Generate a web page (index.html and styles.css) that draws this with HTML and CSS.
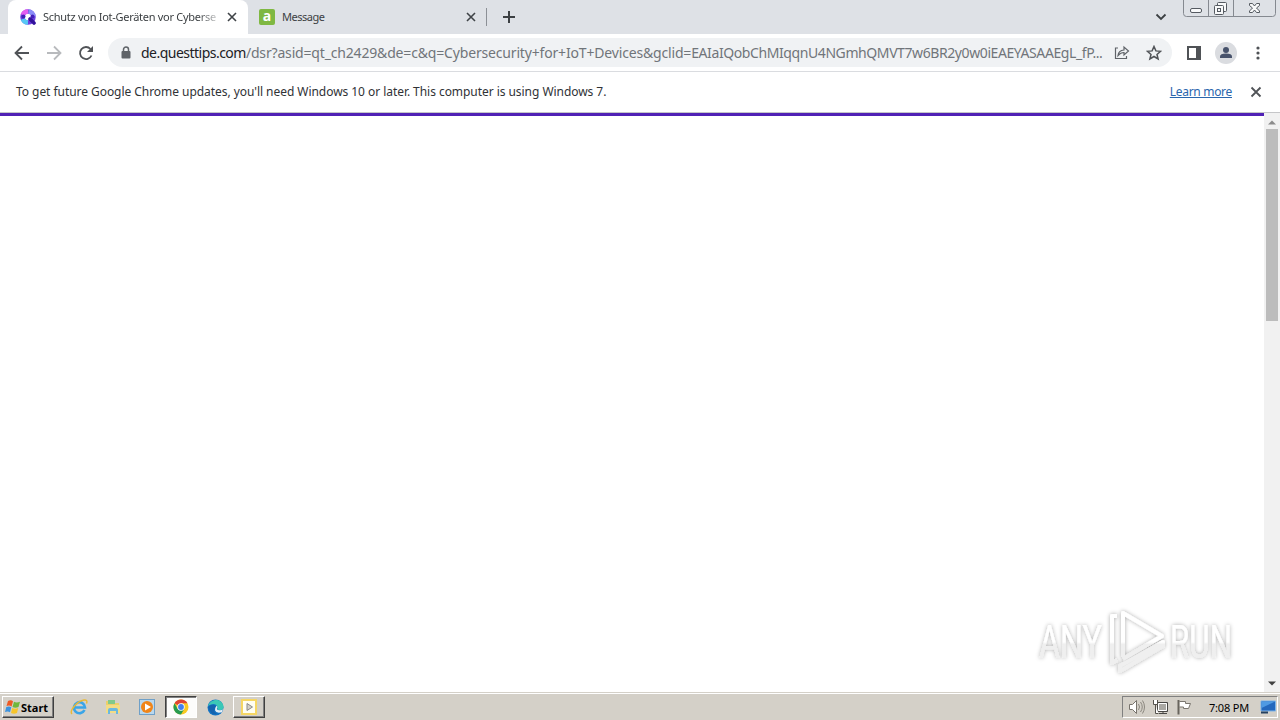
FILE: index.html
```html
<!doctype html>
<html lang="en">
  <head>
    <meta charset="UTF-8" />
    <title>Schutz von Iot-Geräten vor Cybersecurity</title>
    <link rel="stylesheet" href="styles.css">
  </head>

  <body>
    <div class="tabstrip">
      <div class="tab active">
        <svg class="favicon" width="16" height="16" viewBox="0 0 16 16">
          <circle cx="8" cy="8" r="5.5" fill="none" stroke="#6c3fe0" stroke-width="4.5" />
          <path d="M2.8 6a5.5 5.5 0 0 1 5.2-3.5" fill="none" stroke="#e45cf0" stroke-width="4.5" />
          <path d="M8 13.5A5.5 5.5 0 0 1 2.8 10" fill="none" stroke="#58c8f5" stroke-width="4.5" />
          <path d="M8.5 2.5a5.5 5.5 0 0 1 5 5" fill="none" stroke="#8a8cf8" stroke-width="4.5" />
          <path d="M10 10l4 4" stroke="#32129c" stroke-width="3.6" stroke-linecap="round" />
          <circle cx="3.5" cy="7.5" r="2" fill="#4420ba" />
          <circle cx="12.500" cy="7.500" r="2" fill="#4420ba" />
        </svg>
        <span class="tab-title fade">Schutz von Iot-Geräten vor Cyberse</span>
        <svg class="tab-close" width="10" height="10" viewBox="0 0 10 10"><path d="M1 1l8 8M9 1l-8 8" /></svg>
      </div>
      <div class="tab">
        <span class="message-icon">a</span>
        <span class="tab-title message">Message</span>
        <svg class="tab-close" width="10" height="10" viewBox="0 0 10 10"><path d="M1 1l8 8M9 1l-8 8" /></svg>
      </div>
      <svg class="new-tab" width="12" height="12" viewBox="0 0 12 12"><path d="M6 0v12M0 6h12" /></svg>
      <svg class="tab-search" width="12" height="8" viewBox="0 0 12 8"><path d="M1.5 1.5L6 6l4.500-4.500" /></svg>
      <svg class="window-buttons" width="94" height="18" viewBox="0 0 94 18">
        <path d="M.5 0v13.500q0 3 3 3h86q3 0 3-3V0M25.500 0v16M50.500 0v16" fill="none" stroke="#858990" />
        <g fill="#f8f9fa" stroke="#555a61">
          <rect x="7.500" y="8.500" width="11" height="4" rx="1.500" />
          <rect x="34.500" y="2.500" width="9" height="9" rx="1" />
          <rect x="31.500" y="5.500" width="9" height="9" rx="1" />
          <rect x="34.500" y="8.500" width="3" height="3" />
          <path d="M66.500 3.500h3l2 2.500 2-2.500h3v2L73.500 8l3 3v1.500h-3l-2-2.500-2 2.500h-3V11l3-3-3-2.500z" />
        </g>
      </svg>
    </div>

    <div class="toolbar">
      <svg class="nav" width="16" height="16" viewBox="0 0 16 16"><path d="M15 8H2M8 1.500L1.500 8 8 14.500" /></svg>
      <svg class="nav disabled" width="16" height="16" viewBox="0 0 16 16"><path d="M1 8h13M8 1.500L14.500 8 8 14.500" /></svg>
      <svg class="nav" width="16" height="16" viewBox="0 0 16 16"><path d="M13.500 10.500A6 6 0 1 1 12.500 4" /><path class="solid" d="M15 1v6H9z" /></svg>
      <div class="omnibox">
        <svg class="lock" width="10" height="13" viewBox="0 0 10 13"><path d="M2.500 6V3.500a2.500 2.500 0 0 1 5 0V6" fill="none" stroke="#5f6368" stroke-width="1.500" /><rect x=".5" y="5" width="9" height="7.500" rx="1" fill="#5f6368" /></svg>
        <span class="url"><span class="host">de.questtips.com</span><span class="path">/dsr?asid=qt_ch2429&amp;de=c&amp;q=Cybersecurity+for+IoT+Devices&amp;gclid=</span><span class="click-id">EAIaIQobChMIqqnU4NGmhQMVT7w6BR2y0w0iEAEYASAAEgL_fP...</span></span>
        <svg class="share" width="16" height="15" viewBox="0 0 16 15"><path d="M4 3H1.500v10.500h11V11M4 10.500q.5-5 6-5.500V2l4.500 4L10 10V7.500q-3.500 0-6 3z" /></svg>
        <svg class="star" width="16" height="16" viewBox="0 0 16 16"><path d="M8 1.500l1.900 4.400 4.700.4-3.600 3.100 1.100 4.600L8 11.500 3.900 14 5 9.400 1.400 6.300l4.700-.4z" /></svg>
      </div>
      <svg class="side-panel" width="14" height="14" viewBox="0 0 14 14"><rect x="1" y="1" width="12" height="12" fill="none" stroke="#4f5256" stroke-width="2" /><path d="M9 1h4v12H9z" fill="#4f5256" /></svg>
      <svg class="profile" width="22" height="22" viewBox="0 0 22 22"><circle cx="11" cy="11" r="11" fill="#dadce0" /><circle cx="11" cy="8" r="3" fill="#47526b" /><path d="M5 16v-1.500q0-3 6-3t6 3V16z" fill="#47526b" /></svg>
      <svg class="menu" width="4" height="14" viewBox="0 0 4 14"><circle cx="2" cy="2" r="1.600" /><circle cx="2" cy="7" r="1.600" /><circle cx="2" cy="12" r="1.600" /></svg>
    </div>

    <div class="infobar">
      <span class="info-text">To get future Google Chrome updates, you'll need Windows 10 or later. This computer is using Windows 7.</span>
      <a class="learn-more" href="#">Learn more</a>
      <svg class="info-close" width="12" height="12" viewBox="0 0 12 12"><path d="M1.500 1.500l9 9M10.500 1.500l-9 9" /></svg>
    </div>

    <div class="viewport">
      <div class="page">
        <div class="progress"></div>
        <svg class="watermark" width="210" height="74" viewBox="0 0 210 74">
          <defs>
            <linearGradient id="fade" x1="0" y1="0" x2="0" y2="1">
              <stop offset=".5" stop-color="#fff" />
              <stop offset=".54" stop-color="#efefef" />
            </linearGradient>
            <filter id="glow" x="-10%" y="-20%" width="120%" height="140%">
              <feDropShadow dx="0" dy="0" stdDeviation="2" flood-color="#000" flood-opacity=".34" />
            </filter>
          </defs>
          <g filter="url(#glow)">
            <text x="7" y="52" textLength="63" lengthAdjust="spacingAndGlyphs">ANY</text>
            <text x="138" y="52" textLength="62" lengthAdjust="spacingAndGlyphs">RUN</text>
            <path d="M91 51V7l39 23-39 23M85 10h-5v47l5-3M88 60v5l43-25v-4z" fill="none" stroke="url(#fade)" stroke-width="4" stroke-linejoin="round" />
          </g>
        </svg>
      </div>
      <div class="scrollbar">
        <svg width="8" height="5" viewBox="0 0 8 5"><path d="M0 4.500L4 .5l4 4z" fill="#8b8b8b" /></svg>
        <div class="thumb"></div>
        <svg class="down" width="8" height="5" viewBox="0 0 8 5"><path d="M0 .5l4 4 4-4z" fill="#404040" /></svg>
      </div>
    </div>

    <div class="taskbar">
      <div class="start">
        <svg width="16" height="16" viewBox="0 0 16 16">
          <path d="M3 2q3-1.500 5 .3L6.600 7.500Q4.500 6 1.500 7z" fill="#ee5a24" />
          <path d="M9 2.800q2.500 1.500 6 0L13.500 8q-3 1.400-6 0z" fill="#70b73c" />
          <path d="M1.300 8q3-1.300 5 .3L5 13.300Q3 12 0 13z" fill="#3c93df" />
          <path d="M7.200 9q3 1.400 6 0L12 14q-3 1.500-6 0z" fill="#f7c52b" />
        </svg>
        <span>Start</span>
      </div>
      <div class="task ie">
        <svg width="18" height="18" viewBox="0 0 18 18">
          <path d="M14.500 12A5.500 5.500 0 1 1 15 9.500H4" fill="none" stroke="#3aa5e8" stroke-width="2.600" />
          <path d="M2 16C-1 13 7 3 14 2q4-.5 2.500 3.500" fill="none" stroke="#e9b936" stroke-width="1.400" />
        </svg>
      </div>
      <div class="task">
        <svg width="18" height="18" viewBox="0 0 18 18">
          <path d="M2 3h5l1 2h7v10H2z" fill="#edcf69" />
          <path d="M4 2h7v4H4z" fill="#81c98a" />
          <path d="M2 7h14v8H2z" fill="#f3dc85" />
          <path d="M4 16v-4q0-2 2-2h6q2 0 2 2v4h-2v-3H6v3z" fill="#6ab8df" />
        </svg>
      </div>
      <div class="task">
        <svg width="18" height="18" viewBox="0 0 18 18">
          <rect x="1.500" y="1.500" width="15" height="15" fill="#b9d8ee" stroke="#6fa0c8" />
          <circle cx="9" cy="9" r="6" fill="#f08519" />
          <path d="M7 5.500l6 3.500-6 3.500z" fill="#fff" />
        </svg>
      </div>
      <div class="task pressed">
        <svg width="16" height="16" viewBox="0 0 16 16">
          <circle cx="8" cy="8" r="7.500" fill="#f9c922" />
          <path d="M8 8L1.500 4.250A7.500 7.500 0 0 1 14.500 4.250H8z" fill="#df4434" />
          <path d="M1.500 4.250A7.500 7.500 0 0 0 8 15.500l3.200-5.600L8 8 4.750 9.900z" fill="#279b50" />
          <circle cx="8" cy="8" r="3.700" fill="#fff" />
          <circle cx="8" cy="8" r="2.900" fill="#4280ee" />
        </svg>
      </div>
      <div class="task">
        <svg width="17" height="17" viewBox="0 0 17 17">
          <circle cx="8.500" cy="8.500" r="8" fill="#1474c4" />
          <path d="M1 7C3 0 14-2 16.500 7q.5 4-4 4.200Q9.500 11 10.500 8 9 4 4 5.500 2 6 1 7z" fill="#3bc8b6" />
          <path d="M1 8q4-4 8-1-4 5 1 8-6 2-9-7z" fill="#1463ae" />
          <path d="M10.500 8q-2 3 2 3.300 2 .2 3.500-1l-1 3q-6 1.500-7-2-.3-2 1.500-4.500z" fill="#e5eff4" />
        </svg>
      </div>
      <div class="task raised">
        <svg width="16" height="16" viewBox="0 0 16 16">
          <rect x="1" y="1" width="14" height="14" fill="#fffef2" stroke="#f5d664" stroke-width="2" />
          <path d="M6 4.500l5.500 3.500L6 11.500z" fill="#d4d0c8" stroke="#8a8a8a" />
        </svg>
      </div>

      <div class="tray">
        <svg width="17" height="16" viewBox="0 0 17 16">
          <path d="M1.500 5.500h3l4-4v13l-4-4h-3z" fill="#fff" stroke="#77736c" />
          <path d="M10.500 5q2 3 0 6M12.500 3q3.500 5 0 10M14.500 1.500q4 6.500 0 13" fill="none" stroke="#8b877f" />
        </svg>
        <svg width="17" height="16" viewBox="0 0 17 16">
          <path d="M5.500 3.500h10v9h-10z" fill="#aaa8a3" stroke="#494744" />
          <path d="M6.500 4.500h8v7h-8z" fill="none" stroke="#fff" />
          <path d="M7 14.500h8M11 12v3" stroke="#494744" />
          <path d="M1.500 1v4.500h4V1M3.500 5.500v9h3" fill="#fff" stroke="#55524d" />
        </svg>
        <svg width="17" height="16" viewBox="0 0 17 16">
          <path d="M3.500 2.500h6v2h5l-2 5h-5v-1.500h-4" fill="#fff" stroke="#7a766f" />
          <path d="M2.500 1v14.500" stroke="#68645d" stroke-width="2" />
        </svg>
        <span class="clock">7:08 PM</span>
        <svg width="17" height="14" viewBox="0 0 17 14">
          <path d="M1 1h14.500v10H1z" fill="#2468bd" stroke="#7eb4e8" />
          <path d="M1.500 1.500h13.500L1.500 8z" fill="#4f9ae3" />
          <path d="M1 12.500h7" stroke="#24405f" stroke-width="2" />
        </svg>
      </div>
    </div>
  </body>
</html>
```

FILE: styles.css
```css
* {
  box-sizing: border-box;
}

body {
  width: 1280px;
  height: 720px;
  margin: 0;
  display: flex;
  flex-direction: column;
  overflow: hidden;
  background: #fff;
  font-family: 'Noto Sans', 'DejaVu Sans', sans-serif;
  white-space: nowrap;
}

svg {
  flex: none;
}

.tabstrip {
  display: flex;
  align-items: center;
  height: 34px;
  padding-left: 8px;
  background: #dee1e6;
}

.tab {
  display: flex;
  align-items: center;
  width: 239px;
  height: 18px;
  padding: 0 10px 0 11px;
  border-right: 1px solid #8c9096;
}

.tab.active {
  width: 240px;
  height: 34px;
  padding: 0 11px 0 12px;
  background: #fff;
  border: none;
  border-radius: 8px 8px 0 0;
}

.tab-title {
  width: 177px;
  margin-left: 7px;
  font-size: 11px;
  line-height: 16px;
  letter-spacing: -0.28px;
  color: #3c4043;
}

.tab-title.message {
  letter-spacing: -0.5px;
}

.fade {
  mask-image: linear-gradient(90deg, #000 155px, transparent 180px);
}

.tab-close {
  margin-left: auto;
  fill: none;
  stroke: #3f4347;
  stroke-width: 1.6;
}

.message-icon {
  width: 16px;
  height: 16px;
  border-radius: 2px;
  background: #7fb842;
  color: #fff;
  font: bold 14px/14px 'Open Sans', sans-serif;
  text-align: center;
}

.new-tab {
  margin-left: 16px;
  fill: none;
  stroke: #3c4043;
  stroke-width: 2;
}

.tab-search {
  margin-left: auto;
  margin-right: 16px;
  fill: none;
  stroke: #3c4043;
  stroke-width: 1.8;
}

.window-buttons {
  align-self: flex-start;
  margin-right: 3px;
}

.toolbar {
  display: flex;
  align-items: center;
  height: 38px;
  padding-left: 14px;
  border-bottom: 1px solid #dadce0;
}

.nav {
  margin-right: 16px;
  fill: none;
  stroke: #505357;
  stroke-width: 1.8;
}

.nav.disabled {
  stroke: #b8babd;
}

.nav .solid {
  fill: #505357;
  stroke: none;
}

.omnibox {
  display: flex;
  align-items: center;
  width: 1064px;
  height: 29px;
  margin-left: -2px;
  padding: 0 10px 0 13px;
  border-radius: 15px;
  background: #f0f2f4;
}

.url {
  width: 961px;
  margin-left: 10px;
  font-size: 14px;
  line-height: 20px;
  color: #70757a;
}

.host {
  letter-spacing: -0.52px;
  color: #202124;
}

.path {
  letter-spacing: -0.17px;
}

.click-id {
  letter-spacing: -0.41px;
}

.share {
  margin-left: auto;
  fill: none;
  stroke: #5f6368;
  stroke-width: 1.2;
}

.star {
  margin-left: 16px;
  fill: none;
  stroke: #505357;
  stroke-width: 1.5;
}

.side-panel {
  margin-left: 15px;
}

.profile {
  margin-left: 14px;
}

.menu {
  margin-left: 19px;
  fill: #4f5256;
}

.infobar {
  display: flex;
  align-items: center;
  height: 41px;
  padding: 0 18px 1px 16px;
  border-bottom: 1px solid #c5c6c8;
  font-size: 12px;
  letter-spacing: -0.05px;
  color: #303236;
}

.learn-more {
  margin-left: auto;
  letter-spacing: -0.3px;
  color: #2a66ad;
}

.info-close {
  margin-left: 18px;
  fill: none;
  stroke: #505357;
  stroke-width: 1.8;
}

.viewport {
  display: flex;
  height: 579px;
}

.page {
  display: flex;
  flex-direction: column;
  width: 1264px;
}

.progress {
  height: 3px;
  background: #5021b5;
}

.watermark {
  margin: auto 22px 12px auto;
  overflow: visible;
}

.watermark text {
  font: 46px Roboto, sans-serif;
  fill: url(#fade);
}

.scrollbar {
  display: flex;
  flex-direction: column;
  align-items: center;
  width: 16px;
  padding: 7px 0 6px;
  background: #f1f1f1;
}

.thumb {
  width: 12px;
  height: 192px;
  margin-top: 4px;
  background: #bcbcbc;
}

.down {
  margin-top: auto;
}

.taskbar {
  display: flex;
  align-items: center;
  height: 28px;
  padding: 1px 2px 0;
  border-top: 1px solid #d4d0c8;
  box-shadow: inset 0 1px #fff;
  background: #d4d0c8;
  font-size: 11px;
}

.start,
.raised {
  border: 1px solid;
  border-color: #fff #404040 #404040 #fff;
  box-shadow: inset -1px -1px #808080;
}

.start {
  display: flex;
  align-items: center;
  width: 52px;
  height: 22px;
  margin-right: 9px;
  padding-left: 2px;
  font-weight: bold;
}

.task {
  display: flex;
  align-items: center;
  justify-content: center;
  width: 32px;
  height: 22px;
  margin-left: 2px;
}

.ie {
  margin-left: 0;
}

.pressed {
  border: 1px solid;
  border-color: #404040 #fff #fff #404040;
  box-shadow: inset 1px 1px #808080;
  background: #fcfcfb;
}

.tray {
  display: flex;
  align-items: center;
  width: 156px;
  height: 22px;
  margin-left: auto;
  padding-left: 5px;
  gap: 7px;
  border: 1px solid;
  border-color: #808080 #fff #fff #808080;
}

.clock {
  width: 44px;
  margin-left: 9px;
  letter-spacing: -0.2px;
}
```
